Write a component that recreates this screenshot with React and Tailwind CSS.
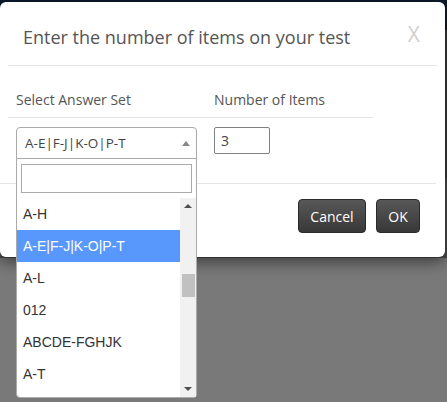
import React from "react";

const items = ["A-H", "A-E|F-J|K-O|P-T", "A-L", "012", "ABCDE-FGHJK", "A-T"];

export default function App() {
  return (
    <div className="relative w-[447px] h-[402px] overflow-hidden bg-[#787978] font-['Open_Sans',sans-serif]">
      <div className="h-[30px] bg-[#0b1a2c]" />
      <div className="h-[148px] bg-[#383838]" />
      <div className="h-[80px] bg-[#4a4a4a]" />

      {/* modal */}
      <div className="absolute left-0 top-[2px] w-[445px] h-[255px] bg-white rounded-[6px] shadow-[0_5px_15px_rgba(0,0,0,0.5)]">
        <div className="mx-2 h-[64px] border-b border-[#e5e5e5] flex items-center justify-between pl-[15px] pr-[17px] pt-[6px]">
          <h4 className="text-[18px] text-[#555] leading-none">Enter the number of items on your test</h4>
          <span className="text-[21px] text-[#cfcfcf] leading-none -mt-[5px]">X</span>
        </div>
        <div className="pt-[16px]">
          <div className="ml-2 w-[365px] h-[36px] flex items-center border-b border-[#e5e5e5] text-[14px] text-[#555]">
            <div className="w-[198px] pl-2">Select Answer Set</div>
            <div className="pl-2">Number of Items</div>
          </div>
          <div className="ml-2 w-[365px] pt-[9px] flex h-[65px]">
            <div className="w-[198px] pl-2">
              <div className="w-[181px] h-[32px] border border-[#aaa] rounded-t-[4px] flex items-center justify-between pl-[8px] pr-[6px]">
                <span className="text-[13.5px] text-[#444]">A-E|F-J|K-O|P-T</span>
                <svg width="8" height="5" viewBox="0 0 8 5"><path d="M0 5 L4 0 L8 5 Z" fill="#888" /></svg>
              </div>
            </div>
            <div className="pl-2">
              <div className="w-[56px] h-[27px] border border-[#808080] rounded-[2px] flex items-center pl-[6px] text-[14px] text-[#444]">3</div>
            </div>
          </div>
        </div>
        <div className="mr-[9px] border-t border-[#e5e5e5] pt-[15px] flex justify-end gap-[10px] pr-[16px]">
          <button className="w-[68px] h-[34px] rounded-[4px] border border-[#2a2a2a] bg-gradient-to-b from-[#585858] to-[#383838] text-white text-[14px]">Cancel</button>
          <button className="w-[44px] h-[34px] rounded-[4px] border border-[#2a2a2a] bg-gradient-to-b from-[#585858] to-[#383838] text-white text-[14px]">OK</button>
        </div>
      </div>

      {/* dropdown */}
      <div className="absolute left-[16px] top-[158px] w-[181px] h-[240px] bg-white border border-[#aaa] rounded-b-[4px] flex flex-col">
        <div className="px-[4px] pt-[5px] pb-[5px]">
          <div className="h-[29px] border border-[#aaa]" />
        </div>
        <div className="flex flex-1 overflow-hidden">
          <div className="flex-1 overflow-hidden font-['Liberation_Sans',Arial,sans-serif] text-[14px]">
            {items.map((it, i) => (
              <div key={it} className={"h-[32px] flex items-center pl-[6px] " + (i === 1 ? "bg-[#5897fb] text-white" : "text-[#333]")}>{it}</div>
            ))}
          </div>
          <div className="w-[16px] bg-[#f1f1f1] flex flex-col items-center justify-between py-[6px]">
            <svg width="8" height="4" viewBox="0 0 8 4"><path d="M0 4 L4 0 L8 4 Z" fill="#505050" /></svg>
            <div className="flex-1 w-full">
              <div className="mt-[66px] mx-auto w-[13px] h-[23px] bg-[#c1c1c1]" />
            </div>
            <svg width="8" height="4" viewBox="0 0 8 4"><path d="M0 0 L4 4 L8 0 Z" fill="#505050" /></svg>
          </div>
        </div>
      </div>
    </div>
  );
}
